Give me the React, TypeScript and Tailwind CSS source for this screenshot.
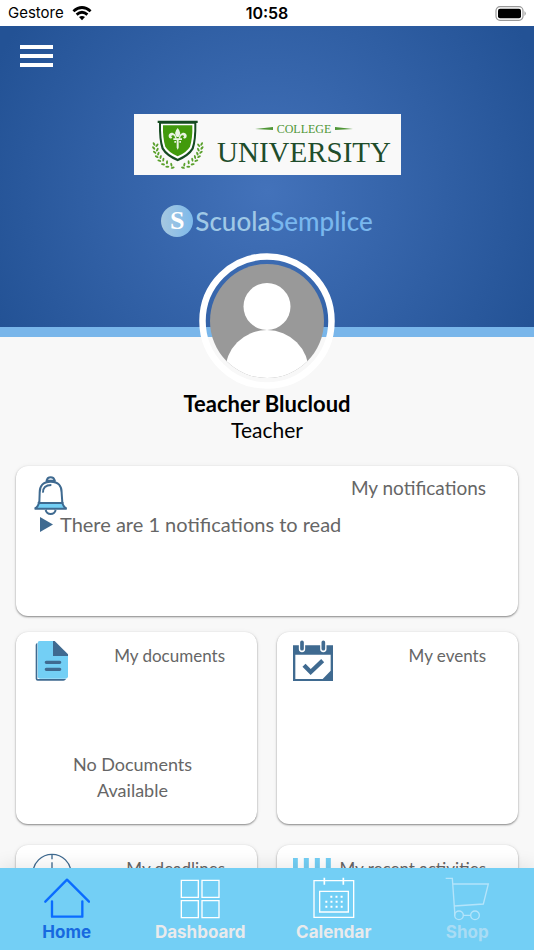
import React from "react";

const NAVY = "#3f6a90";
const SKY = "#73cff5";

// leaves of the laurel, mirrored for the right branch
const leaves = [
  [86, 117, 60], [95, 121, -50], [85, 129, 50], [96, 134, -60], [88, 142, 40], [99, 146, -70],
  [94, 155, 30], [106, 156, -75], [102, 167, 20], [114, 164, -80], [113, 178, 10], [125, 172, -85],
  [126, 185, 0], [138, 179, 80], [142, 188, -15],
];

function Leaves() {
  return (
    <g fill="#5aa02c">
      {leaves.map(([x, y, r], index) => (
        <ellipse key={index} cx={x} cy={y} rx="6" ry="3" transform={`rotate(${r} ${x} ${y})`} />
      ))}
    </g>
  );
}

function CollegeLogo() {
  return (
    <div className="flex h-[61px] w-[267px] items-start bg-[#f9f9f9] pt-1.5 pl-[18px]">
      <svg viewBox="80 45 156 150" className="h-[50px] w-[52px] shrink-0">
        <Leaves />
        <g transform="translate(315 0) scale(-1 1)">
          <Leaves />
        </g>
        <path d="M97 47H217V54H213Q214 105 205 132Q192 154 157 169Q122 154 109 132Q100 105 101 54H97Z" fill="#154a20" />
        <path d="M107 56H207Q208 104 199 129Q188 148 157 161Q126 148 115 129Q106 104 107 56Z" fill="#fff" />
        <path d="M113 61H201Q202 102 194 125Q184 142 157 154Q130 142 120 125Q112 102 113 61Z" fill="#429a0c" />
        <g fill="#e9f3e2">
          <path d="M157 69Q170 83 160 96H154Q144 83 157 69Z" />
          <path d="M154 101C153 82 133 77 130 91C129 101 138 104 141 97C137 98 137 91 142 91C148 91 149 97 149 101Z" />
          <path d="M160 101C161 82 181 77 184 91C185 101 176 104 173 97C177 98 177 91 172 91C166 91 165 97 165 101Z" />
          <path d="M144 100H170V105H144ZM154 105H160V128L157 134L154 128ZM147 108H152V113H147ZM162 108H167V113H162Z" />
        </g>
      </svg>
      <div className="flex flex-1 flex-col items-center pt-0.5 pl-1 font-['Liberation_Serif',serif]">
        <div className="flex items-center gap-1 text-[12px] leading-[14px] text-[#4f9636]">
          <svg viewBox="0 0 18 4" className="h-1 w-[18px]"><path d="M0 2L18 0V3Z" fill="#4f9636" /></svg>
          <span>COLLEGE</span>
          <svg viewBox="0 0 18 4" className="h-1 w-[18px]"><path d="M18 2L0 0V3Z" fill="#4f9636" /></svg>
        </div>
        <div className="text-[29px] leading-8 text-[#1f4d2b]">UNIVERSITY</div>
      </div>
    </div>
  );
}

function AppLogo() {
  return (
    <div className="flex items-center gap-0.5 font-[Lato,sans-serif] text-[26px] leading-8 font-medium text-[#9fc8e6]">
      <span className="flex size-8 items-center justify-center rounded-full bg-linear-to-r from-[#a6c8e0] to-[#7db9ea] font-['Liberation_Serif',serif] font-bold text-white">
        S
      </span>
      <span>Scuola<span className="text-[#79b7ee]">Semplice</span></span>
    </div>
  );
}

function StatusBar() {
  return (
    <div className="grid h-[26px] shrink-0 grid-cols-3 items-center bg-white px-2 font-[Inter,sans-serif] text-[15px] text-black">
      <div className="flex items-center gap-2">
        <span>Gestore</span>
        <svg viewBox="0 0 20 15" className="h-[15px] w-5" fill="none" stroke="#000" strokeWidth="2.8">
          <path d="M1.4 5.2Q10-2.2 18.6 5.2M4.6 8.6Q10 4 15.4 8.6" />
          <path d="M7 11.1Q10 8.8 13 11.1L10 14.2Z" fill="#000" stroke="none" />
        </svg>
      </div>
      <div className="text-center text-[16px] font-semibold">10:58</div>
      <svg viewBox="0 0 32 15" className="h-[15px] w-8 justify-self-end">
        <rect x="2" y=".7" width="27" height="13.6" rx="4" fill="none" stroke="#999" strokeWidth="1.2" />
        <rect x="4" y="2.7" width="23" height="9.6" rx="2" />
        <path d="M30.5 5Q33 7.5 30.5 10Z" fill="#999" />
      </svg>
    </div>
  );
}

function Avatar() {
  return (
    <svg viewBox="0 0 136 136" className="size-[136px]">
      <defs>
        <clipPath id="face"><circle cx="68" cy="68" r="57" /></clipPath>
      </defs>
      <circle cx="68" cy="68" r="64.5" fill="none" stroke="#fff" strokeWidth="6.5" />
      <g clipPath="url(#face)">
        <rect width="136" height="136" fill="#999" />
        <circle cx="68" cy="53.5" r="23.5" fill="#fff" />
        <circle cx="68" cy="119" r="42" fill="#fff" />
      </g>
    </svg>
  );
}

function BellIcon() {
  return (
    <svg viewBox="96 57 126 126" className="size-[42px]" fill="none" stroke={NAVY} strokeWidth="6">
      <path d="M115 143H189L199 161H105Z" fill={SKY} stroke="none" />
      <path d="M141 79V74Q143 67 152 67Q161 67 163 74V79M118 143L119 115Q118 80 152 80Q186 80 185 115L187 143M113 144H191M118 140Q115 156 104 161H200Q189 156 186 140M137 165Q140 177 152 177Q164 177 167 165" />
      <path d="M129 113Q128 90 154 90M137 77H167" />
    </svg>
  );
}

function DocumentIcon() {
  return (
    <svg viewBox="96 60 126 126" className="size-[42px]">
      <path d="M112 69Q107 70 107 75V176Q107 182 113 182H190Q196 182 198 177H112Z" fill={NAVY} />
      <path d="M119 63H160L204 107V169Q204 176 197 176H120Q113 176 113 169V69Q113 63 119 63Z" fill={SKY} />
      <path d="M159 63H164L204 103V108H159Z" fill={NAVY} />
      <path d="M139 127H179M139 148H179" stroke={NAVY} strokeWidth="10" strokeLinecap="round" />
    </svg>
  );
}

function EventIcon() {
  return (
    <svg viewBox="78 60 126 126" className="size-[42px]">
      <path d="M78 76H198V183H78ZM85 104V177H167L191 152V104Z" fill={NAVY} fillRule="evenodd" />
      <path d="M105 66V87M169 66V87" stroke="#fff" strokeWidth="19" strokeLinecap="round" />
      <path d="M105 67V86M169 67V86" stroke={NAVY} strokeWidth="11" strokeLinecap="round" />
      <path d="M111 136L131 156L167 122" fill="none" stroke={NAVY} strokeWidth="13" />
    </svg>
  );
}

function ClockIcon() {
  return (
    <svg viewBox="96 54 126 126" className="size-[42px]" fill="none" stroke={NAVY} strokeWidth="4">
      <circle cx="156" cy="115" r="57" />
      <path d="M156 58V73M156 82V115L182 130" />
    </svg>
  );
}

function ActivityIcon() {
  return (
    <svg viewBox="78 54 126 126" className="size-[42px]" fill="none" stroke={SKY} strokeWidth="15">
      <path d="M85 69V170M118 69V170M151 69V170M184 69V170" />
    </svg>
  );
}

function Card({ icon, title, large, className, children }: any) {
  return (
    <section className={`rounded-xl bg-white pt-2 pl-4 shadow-[0_1px_2px_rgba(0,0,0,0.45),0_0_5px_rgba(0,0,0,0.05)] ${className}`}>
      <div className="flex items-start justify-between pr-8">
        {icon}
        <h2 className={large ? "text-[19px] leading-7" : "text-[17px] leading-8"}>{title}</h2>
      </div>
      {children}
    </section>
  );
}

const menu = [
  {
    text: "Home",
    color: "text-[#1769e0]",
    icon: (
      <svg viewBox="132 127 138 132" className="h-11 w-[46px]" fill="none" stroke="#0a6cff" strokeWidth="7" strokeLinecap="round" strokeLinejoin="round">
        <path d="M136 201L201 135L267 201M156 200V246H247V200" />
      </svg>
    ),
  },
  {
    text: "Dashboard",
    color: "text-[#e9eaec]",
    icon: (
      <svg viewBox="532 127 138 132" className="h-11 w-[46px]" fill="none" stroke="#fff" strokeWidth="4">
        <path d="M545 137H596V188H545ZM607 137H658V188H607ZM545 198H596V249H545ZM607 198H658V249H607Z" />
      </svg>
    ),
  },
  {
    text: "Calendar",
    color: "text-[#e9eaec]",
    icon: (
      <svg viewBox="131 127 138 132" className="h-11 w-[46px]" fill="none" stroke="#fff" strokeWidth="4">
        <path d="M140 138H259V248H140ZM157 170H243V232H157Z" />
        <path d="M171 129V150M228 129V150" strokeWidth="5" />
        <path d="M189 186H226M174 201H226M174 216H226" strokeWidth="6" strokeDasharray="6 9.4" />
      </svg>
    ),
  },
  {
    text: "Shop",
    color: "text-[#a9dcf4]",
    icon: (
      <svg viewBox="531 127 138 132" className="h-11 w-[46px]" fill="none" stroke="#b4e4fa" strokeWidth="4">
        <path d="M536 131H556L563 230V243M558 148H664L649 208L562 214M589 242H611" />
        <circle cx="576" cy="242" r="13" />
        <circle cx="624" cy="242" r="13" />
      </svg>
    ),
  },
];

export default function App() {
  return (
    <div className="flex h-dvh flex-col overflow-hidden bg-[#f8f8f8] font-[Lato,sans-serif] text-[#666]">
      <StatusBar />
      <main className="min-h-0 flex-1 overflow-y-auto [scrollbar-width:none]">
        <header className="flex h-[311px] flex-col border-b-10 border-[#79b6ea] bg-[radial-gradient(circle_at_50%_55%,#4372ba_0px,#235295_300px)]">
          <button aria-label="Menu" className="mt-[19px] ml-5 flex w-[33px] flex-col gap-[5px]">
            <span className="h-1 w-full bg-white"></span>
            <span className="h-1 w-full bg-white"></span>
            <span className="h-1 w-full bg-white"></span>
          </button>
          <div className="mt-[47px] flex flex-col items-center gap-[30px]">
            <CollegeLogo />
            <AppLogo />
          </div>
        </header>
        <div className="-mt-[84px] flex flex-col items-center text-[21px] leading-[26px] text-black">
          <Avatar />
          <h1 className="mt-0.5 text-[22px] font-bold">Teacher Blucloud</h1>
          <p>Teacher</p>
        </div>
        <div className="grid grid-cols-2 gap-x-5 px-4 pt-[23px] pb-5">
          <Card large title="My notifications" icon={<BellIcon />} className="col-span-2 min-h-[150px]">
            <a href="#notifications" className="flex items-center gap-[7px] pl-2 text-[20px] leading-4">
              <svg viewBox="0 0 13 15" className="h-[15px] w-[13px]"><path d="M0 0L13 7.5L0 15Z" fill={NAVY} /></svg>
              There are 1 notifications to read
            </a>
          </Card>
          <Card title="My documents" icon={<DocumentIcon />} className="mt-4 min-h-[192px]">
            <p className="pt-[69px] pr-6 text-center text-[18px] leading-[26px]">No Documents<br />Available</p>
          </Card>
          <Card title="My events" icon={<EventIcon />} className="mt-4 min-h-[192px]" />
          <Card title="My deadlines" icon={<ClockIcon />} className="mt-[21px] min-h-[192px]" />
          <Card title="My recent activities" icon={<ActivityIcon />} className="mt-[21px] min-h-[192px]" />
        </div>
      </main>
      <nav className="z-10 grid h-[82px] shrink-0 grid-cols-4 bg-[#73cff5] pt-[9px] font-[Inter,sans-serif] text-[17px] leading-[22px] font-bold shadow-[0_-4px_16px_rgba(0,0,0,0.08)]">
        {menu.map((item) => (
          <a key={item.text} href={`#${item.text}`} className={`flex flex-col items-center ${item.color}`}>
            {item.icon}
            {item.text}
          </a>
        ))}
      </nav>
    </div>
  );
}
